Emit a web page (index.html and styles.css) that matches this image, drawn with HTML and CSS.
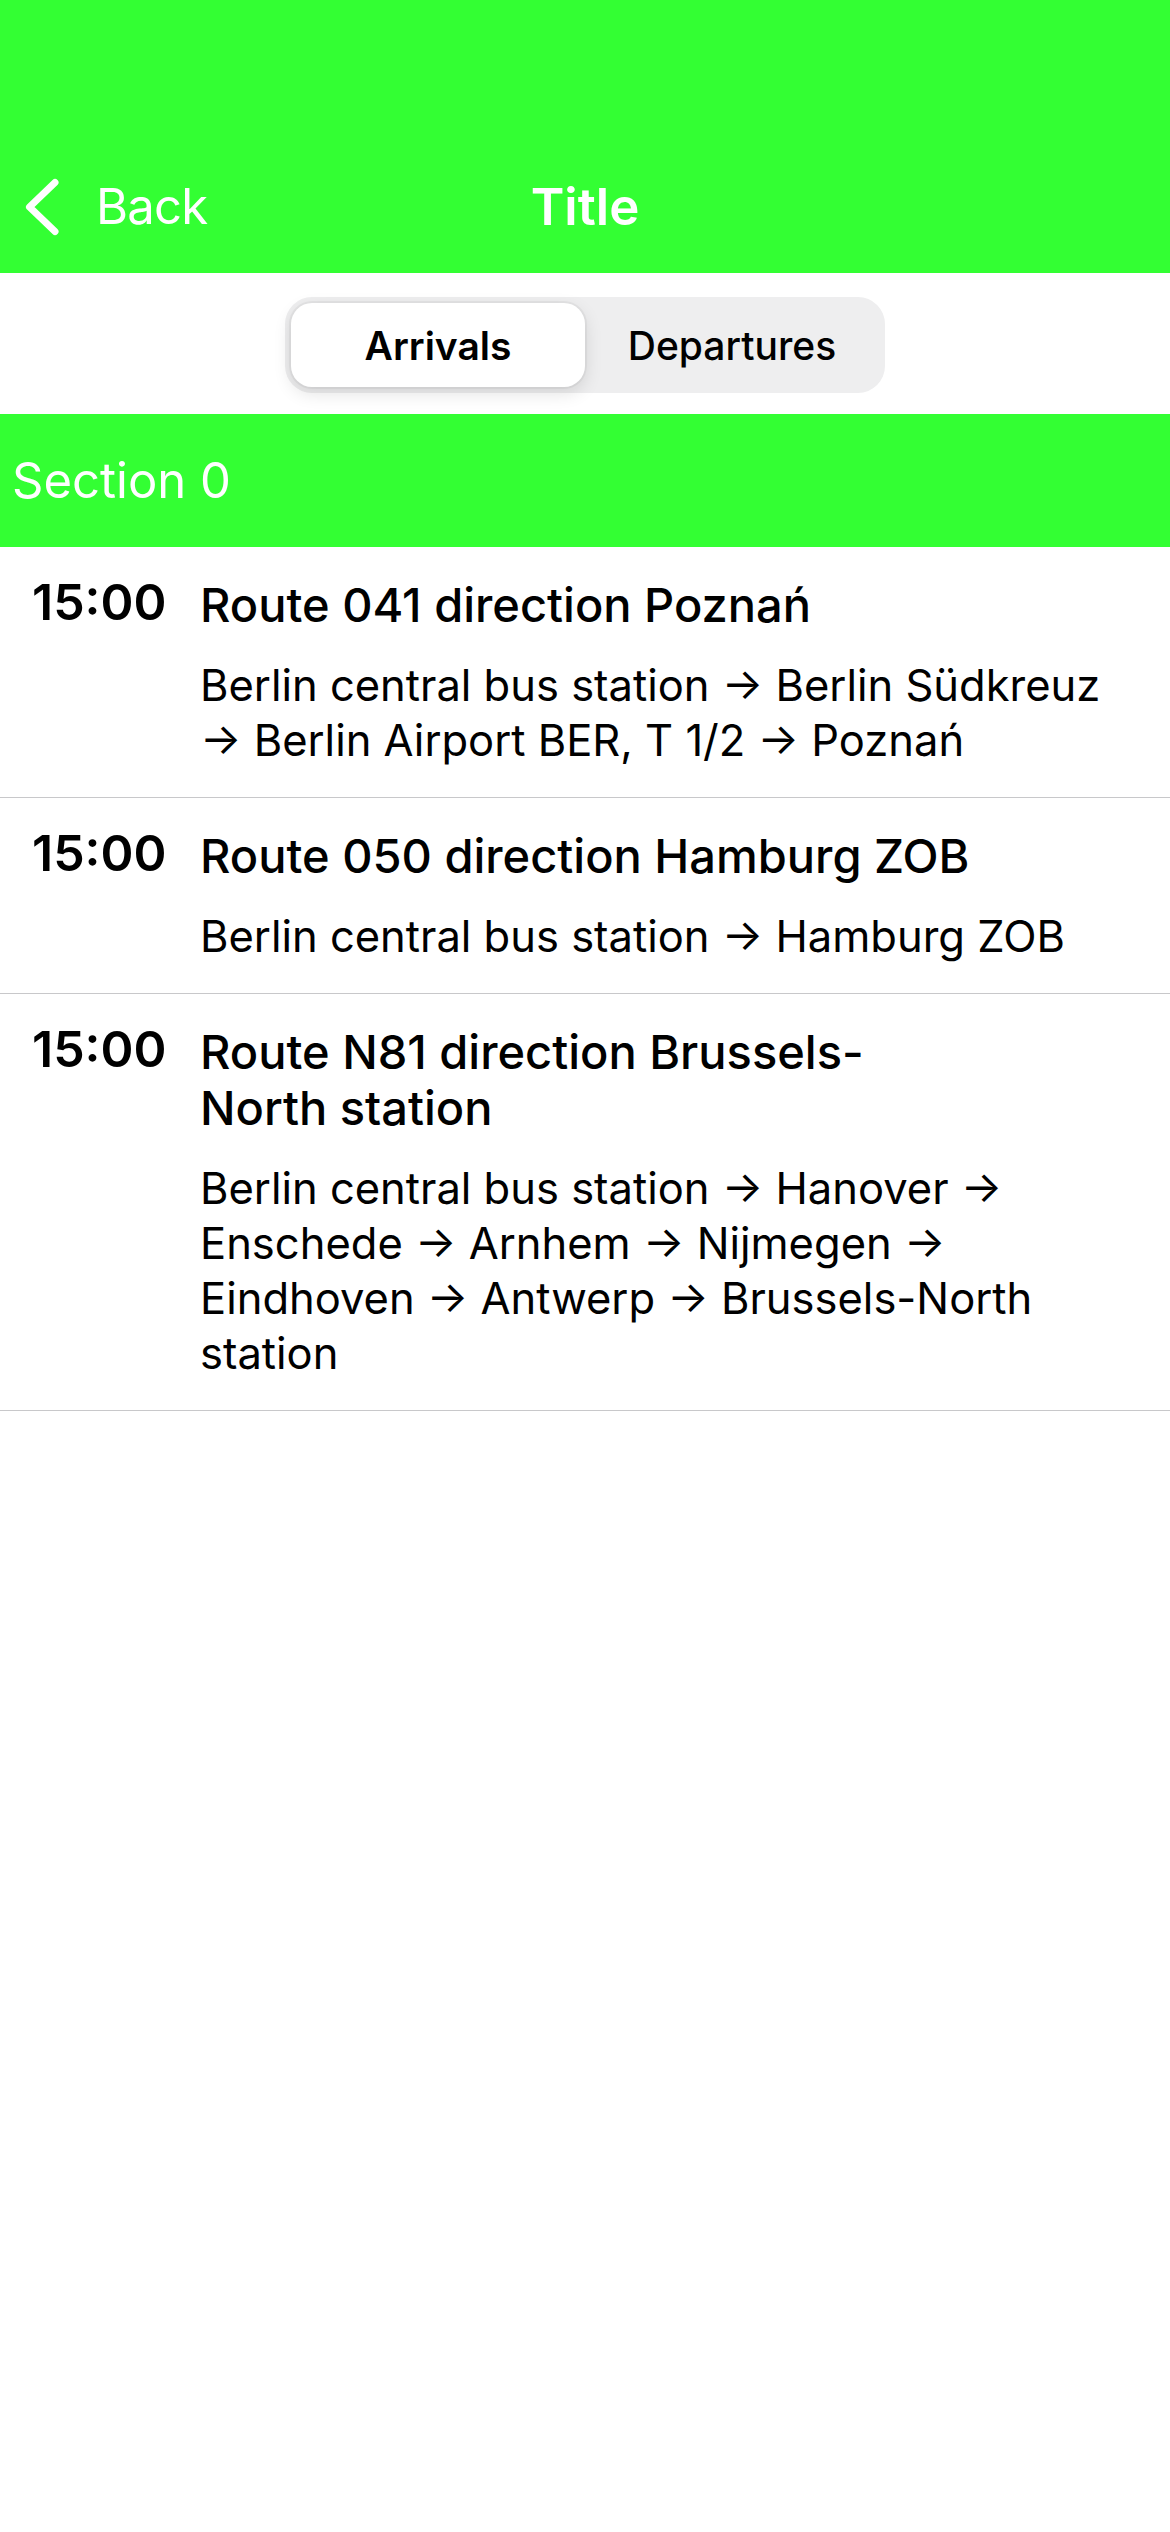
FILE: index.html
```html
<!DOCTYPE html>
<html lang="en">
<head>
<meta charset="utf-8">
<title>Title</title>
<link rel="stylesheet" href="styles.css">
</head>
<body>
<header class="nav">
  <div class="nav-inner">
    <div class="back">
      <svg class="chev" width="40" height="62" viewBox="0 0 40 62"><path d="M33 6.5 L7.5 31 L33 55.5" fill="none" stroke="#fff" stroke-width="7" stroke-linecap="round" stroke-linejoin="round"/></svg>
      <span class="back-label">Back</span>
    </div>
    <div class="nav-title">Title</div>
    <div class="nav-right"></div>
  </div>
</header>

<div class="segbar">
  <div class="seg">
    <div class="seg-item seg-selected">Arrivals</div>
    <div class="seg-item">Departures</div>
  </div>
</div>

<div class="section">Section 0</div>

<ul class="list">
  <li class="row">
    <div class="time">15:00</div>
    <div class="info">
      <div class="title">Route 041 direction Poznań</div>
      <div class="stops">Berlin central bus station → Berlin Südkreuz → Berlin Airport BER, T 1/2 → Poznań</div>
    </div>
  </li>
  <li class="row">
    <div class="time">15:00</div>
    <div class="info">
      <div class="title">Route 050 direction Hamburg ZOB</div>
      <div class="stops">Berlin central bus station → Hamburg ZOB</div>
    </div>
  </li>
  <li class="row">
    <div class="time">15:00</div>
    <div class="info">
      <div class="title">Route N81 direction Brussels-North station</div>
      <div class="stops">Berlin central bus station → Hanover → Enschede → Arnhem → Nijmegen → Eindhoven → Antwerp → Brussels-North station</div>
    </div>
  </li>
</ul>
</body>
</html>
```

FILE: styles.css
```css
* { box-sizing: border-box; }
html, body {
  margin: 0;
  padding: 0;
  background: #ffffff;
  font-family: Inter, "Liberation Sans", sans-serif;
  color: #000;
}
body { width: 1170px; }

.nav {
  height: 273px;
  background: #33ff33;
  display: flex;
  align-items: flex-end;
}
.nav-inner {
  width: 100%;
  height: 132px;
  display: grid;
  grid-template-columns: 1fr auto 1fr;
  align-items: center;
  color: #fff;
}
.back {
  display: flex;
  align-items: center;
  padding-left: 22px;
  gap: 34px;
}
.chev { display: block; }
.back-label {
  font-size: 49px;
  font-weight: 400;
  line-height: 60px;
  letter-spacing: -0.8px;
}
.nav-title {
  font-size: 51px;
  font-weight: 600;
  line-height: 60px;
}

.segbar {
  padding: 24px 0 21px;
}
.seg {
  width: 600px;
  height: 96px;
  margin: 0 auto;
  background: #eeeeef;
  border-radius: 27px;
  padding: 6px;
  display: grid;
  grid-template-columns: 1fr 1fr;
}
.seg-item {
  display: flex;
  align-items: center;
  justify-content: center;
  font-size: 39px;
  font-weight: 500;
  border-radius: 21px;
}
.seg-selected {
  background: #fff;
  font-weight: 600;
  box-shadow: 0 6px 18px rgba(0,0,0,0.12), 0 0 0 2px rgba(0,0,0,0.04);
}

.section {
  height: 133px;
  background: #33ff33;
  color: #fff;
  font-size: 49px;
  font-weight: 400;
  display: flex;
  align-items: center;
  padding-left: 12px;
}

.list {
  list-style: none;
  margin: 0;
  padding: 0;
}
.row {
  display: flex;
  align-items: flex-start;
  padding: 30px 32px 29px 32px;
  border-bottom: 1px solid #c8c8ca;
}
.time {
  width: 168px;
  flex: none;
  font-size: 50px;
  font-weight: 600;
  line-height: 56px;
  margin-top: -3px;
}
.info {
  flex: 1;
  display: flex;
  flex-direction: column;
  gap: 25px;
}
.title {
  font-size: 47px;
  font-weight: 500;
  line-height: 56px;
  max-width: 790px;
}
.stops {
  font-size: 43.5px;
  font-weight: 400;
  line-height: 55px;
}
```
